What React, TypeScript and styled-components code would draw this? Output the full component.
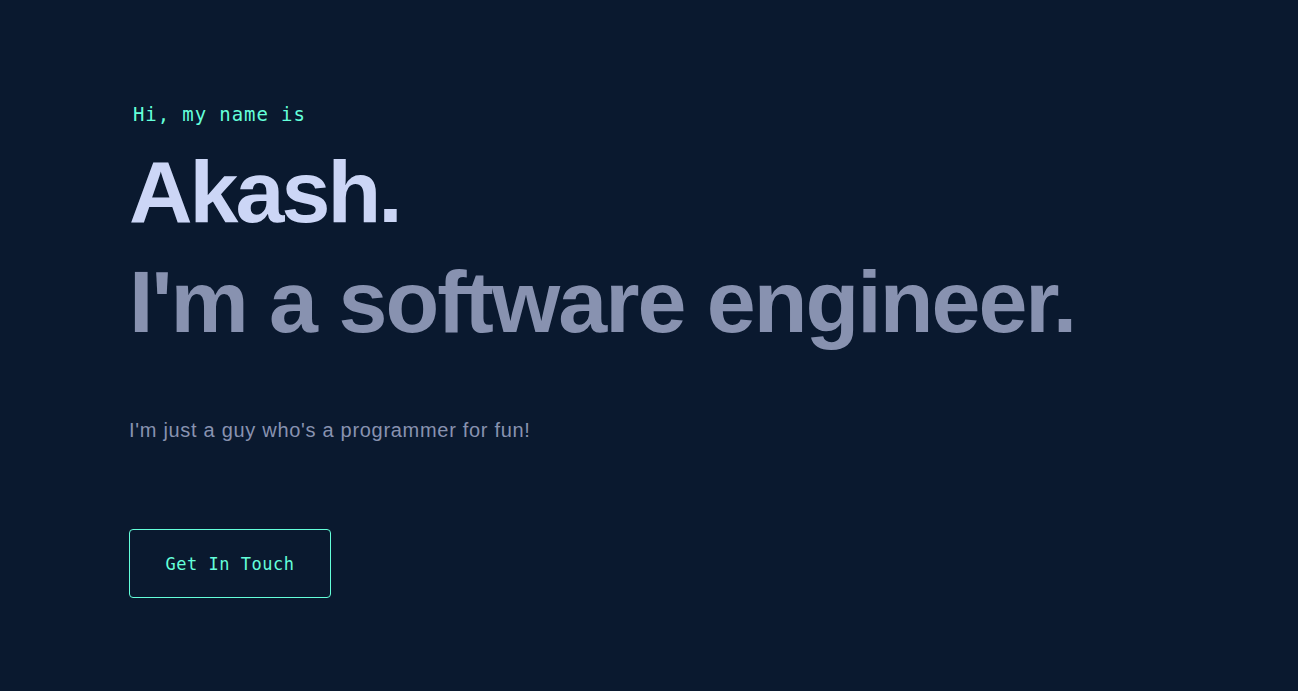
import React from "react";
import styled, { createGlobalStyle } from "styled-components";

const Global = createGlobalStyle`
  html, body { margin: 0; padding: 0; background: #0a192f; }
  body { font-family: "Liberation Sans", Arial, sans-serif; }
  * { box-sizing: border-box; }
`;

const Page = styled.main`
  min-height: 691px;
  background: #0a192f;
  padding: 0 129px;
`;

const Hero = styled.section`
  display: flex;
  flex-direction: column;
  align-items: flex-start;
  padding-top: 102px;
`;

const Intro = styled.h1`
  margin: 0 0 0 4px;
  font-family: "DejaVu Sans Mono", "Liberation Mono", monospace;
  font-weight: 400;
  font-size: 19px;
  letter-spacing: 0.9px;
  line-height: 24px;
  color: #64ffda;
`;

const BigHeading = styled.h2<{ $muted?: boolean; $gap?: number; $spacing: number }>`
  margin: ${(p) => p.$gap ?? 0}px 0 0 0;
  font-family: "Liberation Sans", Arial, sans-serif;
  font-weight: 700;
  font-size: 88px;
  letter-spacing: ${(p) => p.$spacing}px;
  line-height: 110px;
  color: ${(p) => (p.$muted ? "#8892b0" : "#ccd6f6")};
  white-space: nowrap;
`;

const Text = styled.p`
  margin: 58px 0 0 0;
  font-family: "Liberation Sans", Arial, sans-serif;
  font-size: 20px;
  letter-spacing: 0.7px;
  line-height: 30px;
  color: #8892b0;
`;

const Button = styled.a`
  margin-top: 84px;
  width: 202px;
  height: 69px;
  display: flex;
  align-items: center;
  justify-content: center;
  border: 1px solid #64ffda;
  border-radius: 4px;
  color: #64ffda;
  font-family: "DejaVu Sans Mono", "Liberation Mono", monospace;
  font-size: 17px;
  letter-spacing: 0.5px;
  text-decoration: none;
  cursor: pointer;
`;

export default function App() {
  return (
    <>
      <Global />
      <Page>
        <Hero>
          <Intro>Hi, my name is</Intro>
          <BigHeading $gap={11} $spacing={-3}>Akash.</BigHeading>
          <BigHeading $muted $spacing={-2}>I'm a software engineer.</BigHeading>
          <Text>I'm just a guy who's a programmer for fun!</Text>
          <Button href="#contact">Get In Touch</Button>
        </Hero>
      </Page>
    </>
  );
}
